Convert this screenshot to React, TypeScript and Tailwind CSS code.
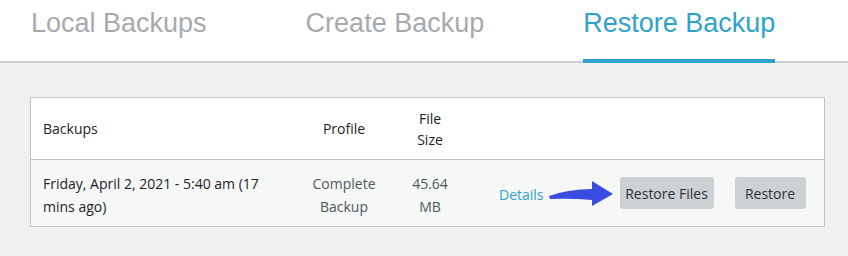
const tabs = [
	{ label: "Local Backups", active: false },
	{ label: "Create Backup", active: false },
	{ label: "Restore Backup", active: true },
];

const ArrowIcon = () => (
	<svg width="68" height="30" viewBox="0 0 68 30" className="shrink-0">
		<path d="M2 18 Q22 11 45 11 L45 3 L66 16 L45 28 L45 22 Q24 20 3 21 Z" fill="#3b4de0" />
	</svg>
);

const App = () => {
	return (
		<div className="w-[848px] h-[256px] bg-[#f0f0f1] overflow-hidden">
			<div className="h-[63px] bg-white border-b-2 border-[#ccd0d4] flex pl-[31px] gap-[99px] font-['Liberation_Sans',Arial,sans-serif]">
				{tabs.map((tab) => (
					<div
						key={tab.label}
						className={
							tab.active
								? "h-[63px] -mb-[2px] pt-[8px] border-b-4 border-[#2ea2cc] text-[27px] leading-[31px] text-[#2ea2cc]"
								: "h-[63px] -mb-[2px] pt-[8px] border-b-4 border-transparent text-[27px] leading-[31px] text-[#a7aaad]"
						}
					>
						{tab.label}
					</div>
				))}
			</div>

			<div className="pt-[34px] pl-[30px]">
				<div className="w-[795px] border border-[#c3c4c7] font-['Open_Sans',sans-serif] text-[14px] text-[#1d2327]">
					<div className="flex h-[62px] bg-white border-b border-[#c3c4c7] items-center">
						<div className="w-[269px] pl-[12px]">Backups</div>
						<div className="w-[88px] text-center">Profile</div>
						<div className="w-[84px] flex justify-center">
							<div className="w-[44px] text-center leading-[21px]">File Size</div>
						</div>
					</div>
					<div className="flex h-[66px] bg-[#f6f7f7] items-center">
						<div className="w-[269px] pl-[12px] pr-[10px] pt-[3px] leading-[23px]">
							Friday, April 2, 2021 - 5:40 am (17 mins ago)
						</div>
						<div className="w-[88px] flex justify-center pt-[3px]">
							<div className="w-[70px] text-center leading-[23px] text-[#50575e]">Complete Backup</div>
						</div>
						<div className="w-[84px] flex justify-center pt-[3px]">
							<div className="w-[44px] text-center leading-[23px] text-[#50575e]">45.64 MB</div>
						</div>
						<div className="flex-1 flex items-center pl-[27px] pr-[16px]">
							<a className="text-[#2ea2cc] pt-[2px]">Details</a>
							<div className="ml-[3px] mr-[5px] flex items-center">
								<ArrowIcon />
							</div>
							<button className="h-[32px] w-[94px] rounded-[3px] bg-[#cdd1d4] text-[#2c3338]">Restore Files</button>
							<button className="ml-[21px] h-[32px] w-[71px] rounded-[3px] bg-[#cdd1d4] text-[#2c3338]">Restore</button>
						</div>
					</div>
				</div>
			</div>
		</div>
	);
};

export default App;
